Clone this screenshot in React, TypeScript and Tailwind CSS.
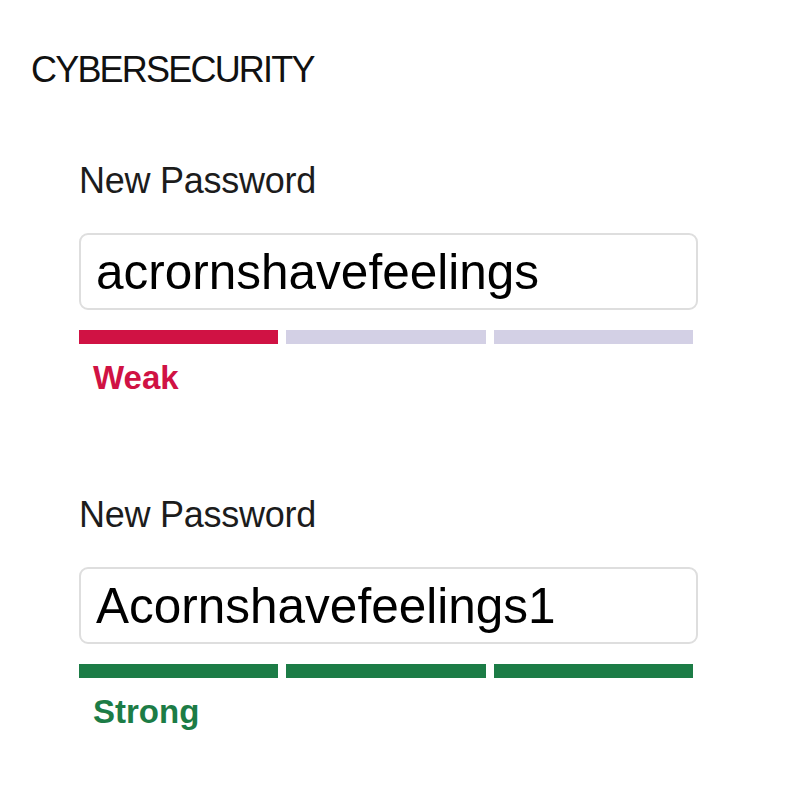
import React from "react";

interface StrengthField {
  id: string;
  label: string;
  value: string;
  level: "weak" | "strong";
}

const fields: StrengthField[] = [
  { id: "pw-weak", label: "New Password", value: "acrornshavefeelings", level: "weak" },
  { id: "pw-strong", label: "New Password", value: "Acornshavefeelings1", level: "strong" },
];

function PasswordField({ field, first }: { field: StrengthField; first: boolean }) {
  const weak = field.level === "weak";
  return (
    <div className={first ? "mt-[75px]" : "mt-[103px]"}>
      <label htmlFor={field.id} className="block text-[36px] leading-none text-[#1c1c1c] tracking-[-0.25px]">
        {field.label}
      </label>
      <input
        id={field.id}
        type="text"
        readOnly
        value={field.value}
        className="mt-[34px] block w-[619px] h-[77px] rounded-[9px] border-2 border-[#dedede] bg-white pl-[15px] text-[49.5px] leading-none text-black outline-none"
      />
      {/* strength meter */}
      <div className="mt-[20px] grid w-[614px] grid-cols-3 gap-2">
        <div className={`h-[14px] ${weak ? "bg-[#d01244]" : "bg-[#1c7c46]"}`} />
        <div className={`h-[14px] ${weak ? "bg-[#d3d0e5]" : "bg-[#1c7c46]"}`} />
        <div className={`h-[14px] ${weak ? "bg-[#d3d0e5]" : "bg-[#1c7c46]"}`} />
      </div>
      <p
        className={`mt-[17px] ml-[14px] text-[33px] font-bold leading-none ${
          weak ? "text-[#d01244]" : "text-[#1c7c46]"
        }`}
      >
        {weak ? "Weak" : "Strong"}
      </p>
    </div>
  );
}

export default function App() {
  return (
    <div className="min-h-screen w-[788px] bg-white pt-[52px] pl-[31px] font-['Liberation_Sans',Arial,sans-serif]">
      <h1 className="text-[36px] leading-none font-normal text-[#111] tracking-[-1.8px]">CYBERSECURITY</h1>
      <div className="pl-[48px]">
        {fields.map((f, i) => (
          <PasswordField key={f.id} field={f} first={i === 0} />
        ))}
      </div>
    </div>
  );
}
